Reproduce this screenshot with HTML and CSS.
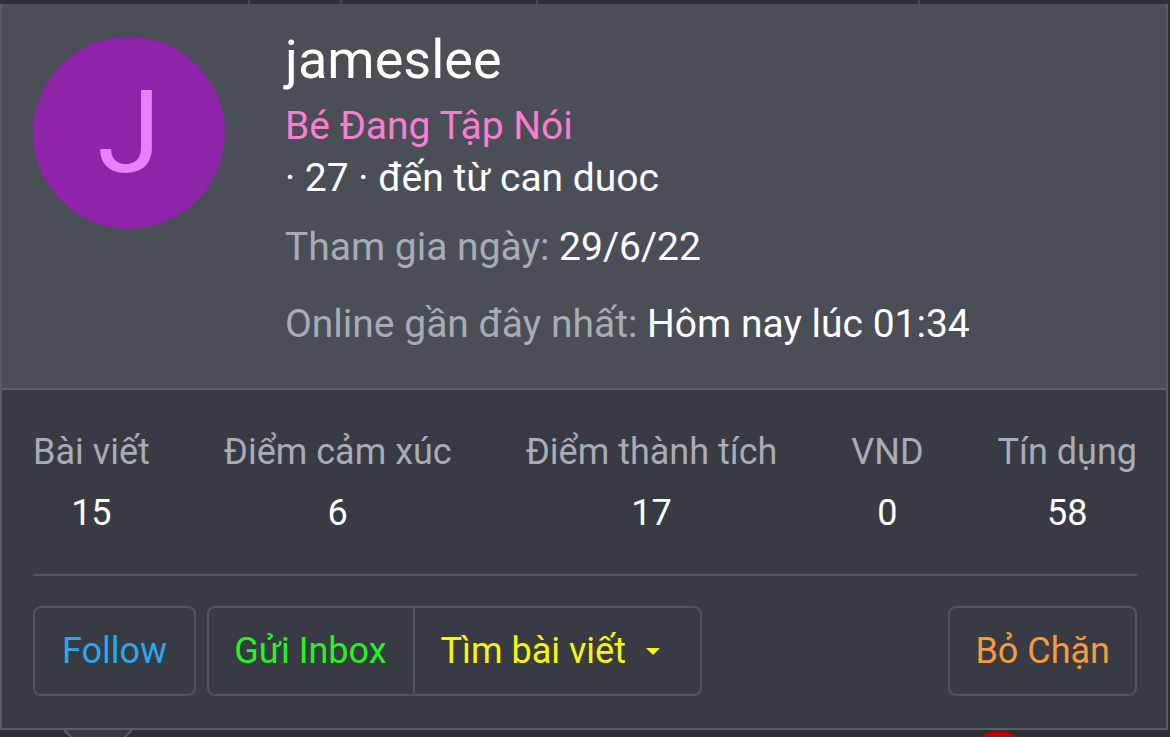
FILE: index.html
```
<!DOCTYPE html>
<html lang="vi">
<head>
    <meta charset="UTF-8">
    <meta name="viewport" content="width=device-width, initial-scale=1.0">
    <title>jameslee</title>
    <link rel="stylesheet" href="styles.css">
</head>
<body>

    <div class="tabs">
        <div class="tab" style="width: 248px"></div>
        <div class="tab" style="width: 90px"></div>
        <div class="tab" style="width: 194px"></div>
        <div class="tab" style="width: 380px"></div>
        <div class="tab tab-last"></div>
    </div>

    <div class="card">
        <div class="card-head">
            <div class="avatar">J</div>
            <div class="info">
                <div class="username">jameslee</div>
                <div class="rank">Bé Đang Tập Nói</div>
                <div class="meta">· 27 · đến từ can duoc</div>
                <div class="pair joined"><span class="muted">Tham gia ngày:</span> 29/6/22</div>
                <div class="pair online"><span class="muted">Online gần đây nhất:</span> Hôm nay lúc 01:34</div>
            </div>
        </div>

        <div class="card-body">
            <div class="stats">
                <div class="stat"><div class="stat-label">Bài viết</div><div class="stat-value">15</div></div>
                <div class="stat"><div class="stat-label">Điểm cảm xúc</div><div class="stat-value">6</div></div>
                <div class="stat"><div class="stat-label">Điểm thành tích</div><div class="stat-value">17</div></div>
                <div class="stat"><div class="stat-label">VND</div><div class="stat-value">0</div></div>
                <div class="stat"><div class="stat-label">Tín dụng</div><div class="stat-value">58</div></div>
            </div>

            <div class="actions">
                <div class="btn btn-follow">Follow</div>
                <div class="btn-group">
                    <div class="btn btn-inbox">Gửi Inbox</div>
                    <div class="btn btn-find">Tìm bài viết <span class="caret"></span></div>
                </div>
                <div class="spacer"></div>
                <div class="btn btn-unblock">Bỏ Chặn</div>
            </div>
        </div>
    </div>

    <div class="below">
        <svg class="pointer" width="68" height="10" viewBox="0 0 68 10">
            <polygon points="0,0 68,0 57,10 11,10" fill="#383b43"/>
            <line x1="0" y1="0" x2="10" y2="10" stroke="#5a5e66" stroke-width="2"/>
            <line x1="68" y1="0" x2="58" y2="10" stroke="#5a5e66" stroke-width="2"/>
        </svg>
        <div class="red-dot"></div>
    </div>

</body>
</html>
```

FILE: styles.css
```
body {
    margin: 0;
    background: #2e3036;
    font-family: Roboto, "Noto Sans", Arial, sans-serif;
    color: #fff;
    overflow: hidden;
}
.tabs {
    display: flex;
    gap: 2px;
    height: 4px;
    background: #45484f;
}
.tab {
    background: #2d3036;
}
.tab-last {
    flex: 1;
}
.card {
    width: 1164px;
    border: 2px solid #585c64;
    border-top: none;
}
.card-head {
    display: flex;
    align-items: flex-start;
    background: #4a4e57;
    padding: 0 0 40px 31px;
    border-bottom: 2px solid #5d6169;
}
.avatar {
    width: 192px;
    height: 192px;
    margin-top: 33px;
    border-radius: 50%;
    background: #8e24aa;
    color: #ea80fc;
    font-size: 115px;
    line-height: 192px;
    text-align: center;
    flex-shrink: 0;
}
.info {
    margin-left: 60px;
    padding-top: 26px;
}
.username {
    font-size: 54px;
    line-height: 60px;
}
.rank {
    font-size: 39px;
    line-height: 48px;
    margin-top: 12px;
    color: #f97ed0;
}
.meta {
    font-size: 39px;
    line-height: 48px;
    margin-top: 4px;
}
.pair {
    font-size: 39px;
    line-height: 48px;
}
.joined {
    margin-top: 21px;
}
.online {
    margin-top: 29px;
}
.muted {
    color: #a8acb4;
}
.card-body {
    background: #383b43;
    padding: 42px 29px 32px 31px;
}
.stats {
    display: flex;
    justify-content: space-between;
    padding-bottom: 41px;
    border-bottom: 2px solid #50545c;
}
.stat {
    text-align: center;
}
.stat-label {
    font-size: 36px;
    line-height: 40px;
    color: #a8acb4;
}
.stat-value {
    font-size: 36px;
    line-height: 40px;
    margin-top: 21px;
}
.actions {
    display: flex;
    gap: 11px;
    margin-top: 30px;
}
.spacer {
    flex: 1;
}
.btn {
    height: 86px;
    padding: 0 26px;
    border: 2px solid #50545c;
    border-radius: 8px;
    font-size: 36px;
    display: flex;
    align-items: center;
}
.btn-group {
    display: flex;
    border: 2px solid #50545c;
    border-radius: 8px;
}
.btn-group .btn {
    border: none;
    border-radius: 0;
}
.btn-group .btn + .btn {
    border-left: 2px solid #50545c;
}
.btn-follow {
    padding: 0 27px;
    color: #29a8f2;
}
.btn-inbox {
    color: #22f522;
    padding-left: 25px;
}
.btn-find {
    color: #f8f800;
    padding-right: 40px;
}
.caret {
    width: 0;
    height: 0;
    margin-left: 20px;
    border-left: 7px solid transparent;
    border-right: 7px solid transparent;
    border-top: 7px solid #f8f800;
}
.btn-unblock {
    color: #f59b3c;
    padding: 0 25px;
}
.below {
    display: flex;
    height: 8px;
    overflow: hidden;
}
.pointer {
    margin-left: 64px;
    flex-shrink: 0;
}
.red-dot {
    width: 64px;
    height: 64px;
    margin-left: 835px;
    margin-top: 1px;
    border-radius: 50%;
    background: #c00000;
    flex-shrink: 0;
}
```
